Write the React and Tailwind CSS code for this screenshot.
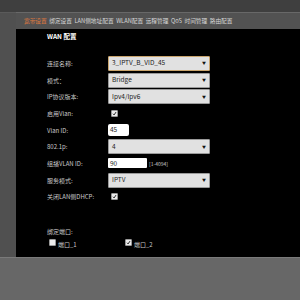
const navItems = ['宽带设置', '绑定设置', 'LAN侧地址配置', 'WLAN配置', '远程管理', 'QoS', '时间管理', '路由配置'];

const font = { fontFamily: '"Noto Sans CJK SC", "Noto Sans", sans-serif' };

function Check() {
  return (
    <svg viewBox="0 0 10 10" className="w-full h-full">
      <path d="M2 5.5 L4.2 7.8 L8 2.2" stroke="#111" strokeWidth="1.8" fill="none" />
    </svg>
  );
}

function Box({ checked }) {
  return (
    <div className="w-[7px] h-[7px] bg-[#ececec] rounded-[1px] border border-[#999]">
      {checked && <Check />}
    </div>
  );
}

function FakeSelect({ value, focused }) {
  return (
    <div className={`w-[102px] h-[15px] flex items-center justify-between pl-[3px] pr-[3px] rounded-[1px] bg-[#e1e1e1] border ${focused ? 'border-[#c9a56e]' : 'border-[#9a9a9a]'}`}>
      <span className="text-[6.5px] text-[#222]">{value}</span>
      <span className="text-[4px] text-[#111]">▼</span>
    </div>
  );
}

function Row({ label, children }) {
  return (
    <div className="flex items-center h-[16.7px]">
      <div className="w-[61px] text-[6px] text-[#c8c8c8]">{label}</div>
      <div className="flex items-center">{children}</div>
    </div>
  );
}

export default function App() {
  return (
    <div className="w-[300px] h-[300px] overflow-hidden bg-[#3e3e3e] flex flex-col" style={font}>
      <div className="h-[12px] bg-[#3f3f3f]"></div>
      <div className="flex h-[245px]">
        <div className="w-[16px] bg-[#505050] border-t border-[#5a5a5a]"></div>
        <div className="flex-1 flex flex-col bg-black">
          <div className="h-[17px] bg-[#525252] border-t border-[#686868] flex items-center gap-[2.5px] pl-[8px]">
            {navItems.map((item, index) => (
              <span key={index} className={`text-[5.7px] ${index === 0 ? 'text-[#e07a3e]' : 'text-[#d8d8d8]'}`}>{item}</span>
            ))}
          </div>
          <div className="pl-[31px] pt-[2px]">
            <div className="text-[6.5px] font-bold text-white h-[12px] flex items-center">WAN 配置</div>
            <div className="mt-[12px]">
              <Row label="连接名称:"><FakeSelect value="3_IPTV_B_VID_45" focused /></Row>
              <Row label="模式："><FakeSelect value="Bridge" /></Row>
              <Row label="IP协议版本:"><FakeSelect value="Ipv4/Ipv6" /></Row>
              <Row label="启用Vlan:"><div className="ml-[3px]"><Box checked /></div></Row>
              <Row label="Vlan ID:">
                <div className="w-[21px] h-[12px] bg-white rounded-[2px] text-[6.5px] text-[#222] pl-[2px] flex items-center">45</div>
              </Row>
              <Row label="802.1p:"><FakeSelect value="4" /></Row>
              <Row label="组播VLAN ID:">
                <div className="w-[39px] h-[10px] bg-white rounded-[1px] text-[6.5px] text-[#222] pl-[2px] flex items-center">90</div>
                <span className="ml-[2px] text-[5px] text-[#cfcfcf]">[1-4094]</span>
              </Row>
              <Row label="服务模式:"><FakeSelect value="IPTV" /></Row>
              <Row label="关闭LAN侧DHCP:"><div className="ml-[3px]"><Box checked /></div></Row>
            </div>
            <div className="mt-[22px] text-[6px] text-[#c8c8c8] h-[8px] flex items-center">绑定端口:</div>
            <div className="flex mt-[4px] pl-[2px]">
              <div className="w-[76px] flex items-end gap-[2px]">
                <Box />
                <span className="text-[6px] text-[#c8c8c8] leading-[6px] translate-y-[2px]">端口_1</span>
              </div>
              <div className="flex items-end gap-[2px]">
                <Box checked />
                <span className="text-[6px] text-[#c8c8c8] leading-[6px] translate-y-[2px]">端口_2</span>
              </div>
            </div>
          </div>
        </div>
      </div>
      <div className="flex-1 bg-[#676767] border-t border-[#7a7a7a]"></div>
    </div>
  );
}
